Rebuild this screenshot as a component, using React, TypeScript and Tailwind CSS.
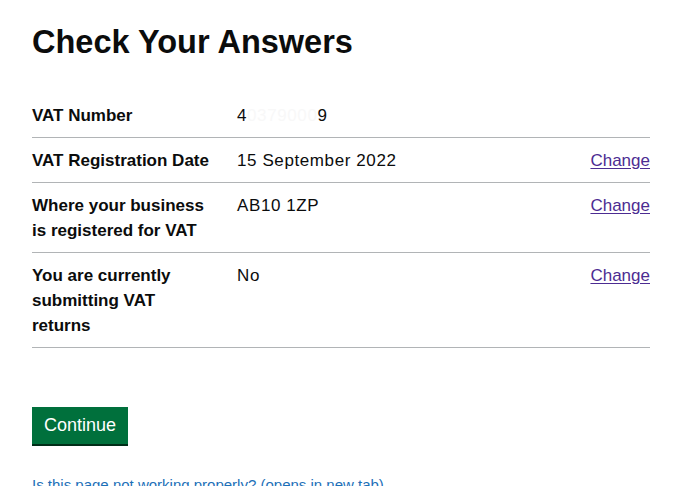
import React from "react";

type Row = {
  label: string;
  value: React.ReactNode;
  change: boolean;
};

const rows: Row[] = [
  {
    label: "VAT Number",
    value: (
      <>
        4<span className="text-[#f8f8f8]">0379000</span>9
      </>
    ),
    change: false,
  },
  { label: "VAT Registration Date", value: "15 September 2022", change: true },
  { label: "Where your business is registered for VAT", value: "AB10 1ZP", change: true },
  { label: "You are currently submitting VAT returns", value: "No", change: true },
];

export default function App() {
  return (
    <div className="min-h-[486px] bg-white pl-8 pt-[22px] text-[#0b0c0c] font-['Liberation_Sans',Arial,sans-serif]">
      <h1 className="mb-[31px] text-[32.5px] font-bold leading-10">Check Your Answers</h1>

      <dl className="w-[618px]">
        {rows.map((row) => (
          <div key={row.label} className="flex border-b border-[#b1b4b6] pt-[10px] pb-[9px] text-[17px] leading-[25px]">
            <dt className="w-[205px] shrink-0 pr-6 font-bold">{row.label}</dt>
            <dd className="flex-1 tracking-[0.6px]">{row.value}</dd>
            <dd className="w-[80px] text-right">
              {row.change && (
                <a href="#" className="text-[#4c2c92] underline underline-offset-2">
                  Change
                </a>
              )}
            </dd>
          </div>
        ))}
      </dl>

      <button className="mt-[59px] bg-[#00703c] px-3 pt-[6px] pb-[6px] text-[18px] leading-[25px] text-white shadow-[0_2px_0_#002d18]">
        Continue
      </button>

      <div className="mt-[28px]">
        <a href="#" className="text-[15px] leading-[25px] text-[#1d70b8] underline underline-offset-2">
          Is this page not working properly? (opens in new tab)
        </a>
      </div>
    </div>
  );
}
